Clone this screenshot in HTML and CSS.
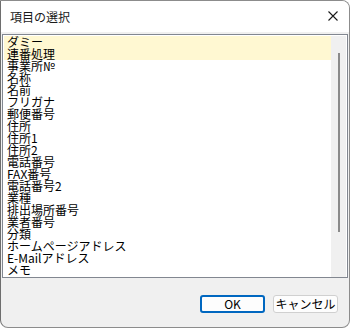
FILE: index.html
```html
<!DOCTYPE html>
<html>
  <head>
    <meta charset="utf-8">
    <link rel="stylesheet" href="styles.css">
  </head>
  <body>
    <div class="dialog">
      <div class="titlebar">
        <span class="title">項目の選択</span>
        <svg class="close" width="10" height="10" viewBox="0 0 10 10">
          <path d="M0.5 0.5 L9.5 9.5 M9.5 0.5 L0.5 9.5" stroke="#1a1a1a" stroke-width="1.1" fill="none"/>
        </svg>
      </div>
      <div class="content">
        <div class="listbox">
          <ul class="items">
            <li class="selected">ダミー</li>
            <li class="selected">連番処理</li>
            <li>事業所№</li>
            <li>名称</li>
            <li>名前</li>
            <li>フリガナ</li>
            <li>郵便番号</li>
            <li>住所</li>
            <li>住所1</li>
            <li>住所2</li>
            <li>電話番号</li>
            <li>FAX番号</li>
            <li>電話番号2</li>
            <li>業種</li>
            <li>排出場所番号</li>
            <li>業者番号</li>
            <li>分類</li>
            <li>ホームページアドレス</li>
            <li>E-Mailアドレス</li>
            <li>メモ</li>
          </ul>
          <div class="scrollbar"><div class="thumb"></div></div>
        </div>
        <div class="buttons">
          <button class="btn default">OK</button>
          <button class="btn">キャンセル</button>
        </div>
      </div>
    </div>
  </body>
</html>
```

FILE: styles.css
```css
html, body {
  margin: 0;
  padding: 0;
  background-color: white;
}
body {
  font-family: "Noto Sans CJK JP", "Noto Sans", sans-serif;
  font-size: 12px;
  color: black;
}
.dialog {
  width: 348px;
  height: 326px;
  border: 1px solid #8c8c8c;
  border-left-color: #6e6e6e;
  border-radius: 0 8px 8px 8px;
  background-color: #f0f0f0;
  overflow: hidden;
  display: flex;
  flex-flow: column;
}
.titlebar {
  height: 31px;
  background-color: white;
  display: flex;
  align-items: center;
  justify-content: space-between;
  padding: 0 11px 0 9px;
  flex: none;
}
.title {
  font-size: 12px;
  color: #1a1a1a;
  margin-top: -1px;
}
.close {
  margin-top: -1px;
}
.content {
  flex: 1;
  display: flex;
  flex-flow: column;
  padding: 2px 0 0 1px;
}
.listbox {
  width: 343px;
  height: 241px;
  border: 1px solid #828790;
  background-color: white;
  display: flex;
  padding: 1px 0 0 1px;
  box-sizing: content-box;
}
.items {
  flex: 1;
  list-style: none;
  margin: 0;
  padding: 0;
}
.items li {
  height: 12px;
  line-height: 12px;
  font-size: 12px;
  padding-left: 3px;
  white-space: nowrap;
}
.items li.selected {
  background-color: #fff8d2;
}
.scrollbar {
  width: 15px;
  background-color: #f0f0f0;
  display: flex;
  justify-content: center;
  padding: 17px 0 0 0;
  margin-right: 1px;
}
.thumb {
  width: 2px;
  height: 179px;
  background-color: #8a8a8a;
  margin-left: 1px;
}
.buttons {
  display: flex;
  justify-content: flex-end;
  gap: 8px;
  padding: 17px 11px 0 0;
}
.btn {
  width: 65px;
  height: 18px;
  padding: 0;
  font-family: "Noto Sans CJK JP", "Noto Sans", sans-serif;
  font-size: 12px;
  line-height: 14px;
  color: black;
  background-color: #fdfdfd;
  border: 1px solid #d0d0d0;
  border-radius: 3px;
}
.btn.default {
  border: 2px solid #0067c0;
  line-height: 12px;
}
```
